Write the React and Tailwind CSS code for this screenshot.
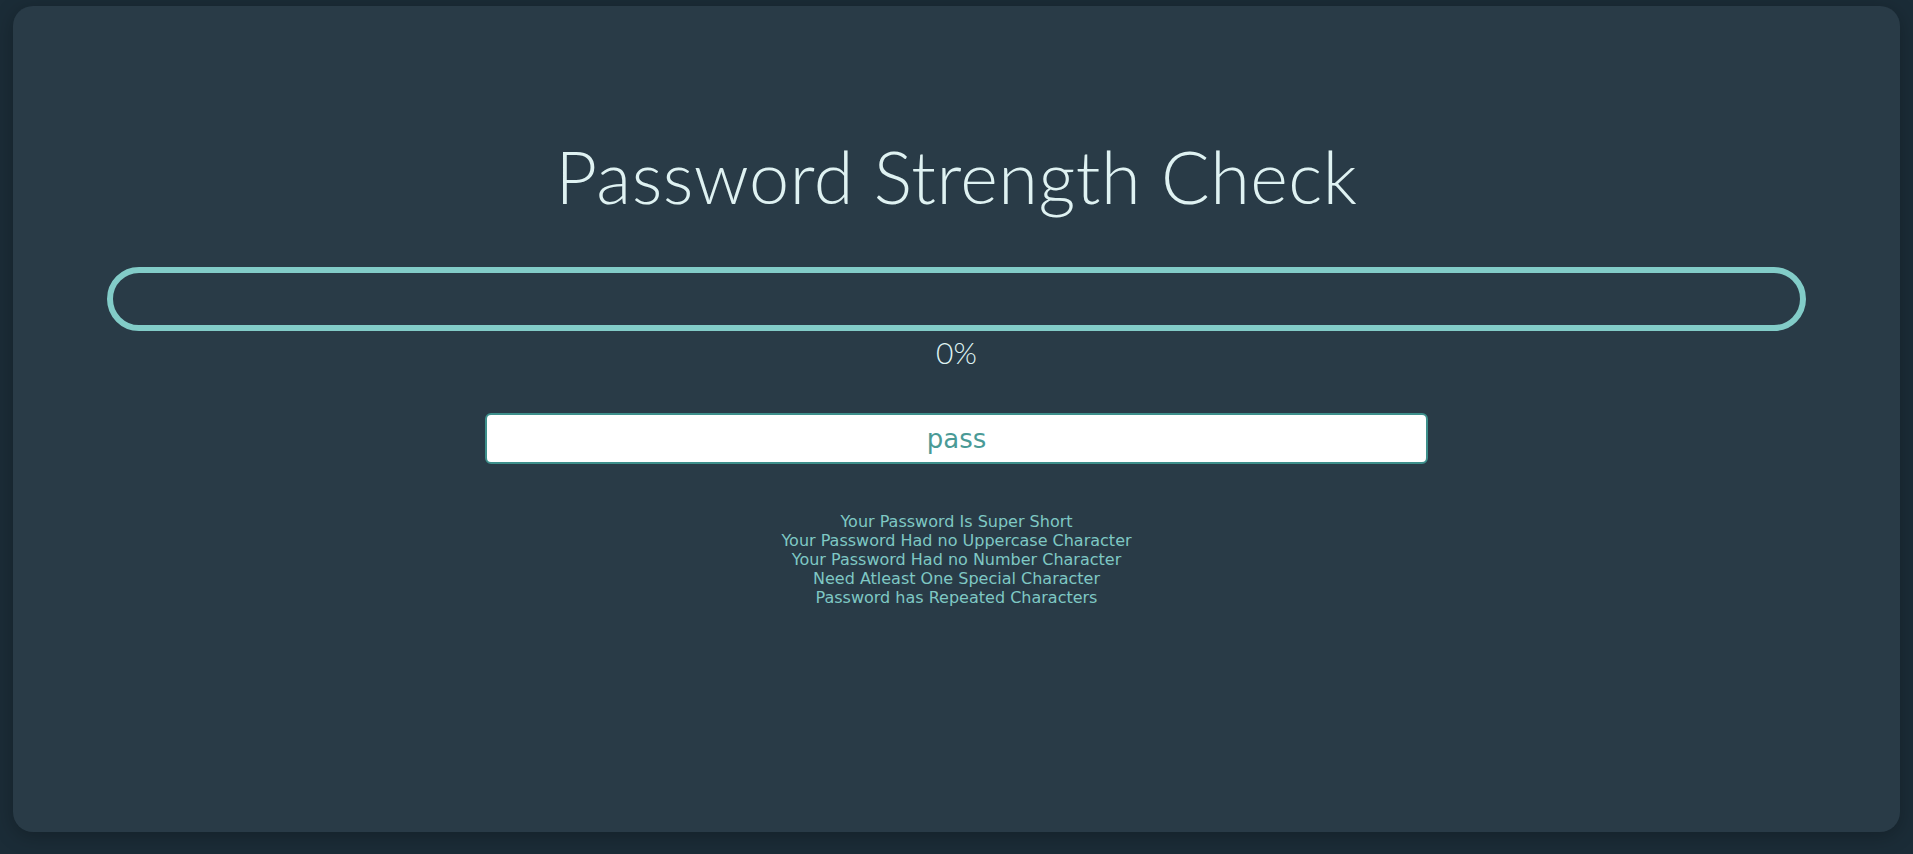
import React, { useState } from "react";

export default function App() {
  const [password, setPassword] = useState("pass");

  const messages = [
    "Your Password Is Super Short",
    "Your Password Had no Uppercase Character",
    "Your Password Had no Number Character",
    "Need Atleast One Special Character",
    "Password has Repeated Characters",
  ];

  return (
    <div className="h-screen w-full bg-[#1b2c37] pt-[6px] px-[13px] pb-[22px]">
      <div className="h-full w-full rounded-[20px] bg-[#293b47] shadow-[0_4px_20px_rgba(0,0,0,0.25)] flex flex-col items-center pt-[122px]">
        <h1 className="font-['Lato',sans-serif] font-light text-[72px] leading-[96px] text-[#dff2f2] tracking-[0.5px]">
          Password Strength Check
        </h1>

        <div className="mt-[43px] w-[90%] h-[64px] rounded-full border-[6px] border-[#82ccc8]"></div>

        <p className="mt-[1px] font-['Lato',sans-serif] font-light text-[30px] leading-[40px] text-[#dff2f2]">
          0%
        </p>

        <input
          type="text"
          value={password}
          onChange={(e) => setPassword(e.target.value)}
          className="mt-[41px] w-1/2 h-[51px] rounded-[6px] border-2 border-[#3d8f8b] bg-white text-center text-[26px] text-[#4a9a96] font-['DejaVu_Sans',sans-serif] outline-none"
        />

        <div className="mt-[48px] flex flex-col items-center font-['DejaVu_Sans',sans-serif] text-[16px] leading-[19px] text-[#7fc8c4]">
          {messages.map((m) => (
            <span key={m}>{m}</span>
          ))}
        </div>
      </div>
    </div>
  );
}
